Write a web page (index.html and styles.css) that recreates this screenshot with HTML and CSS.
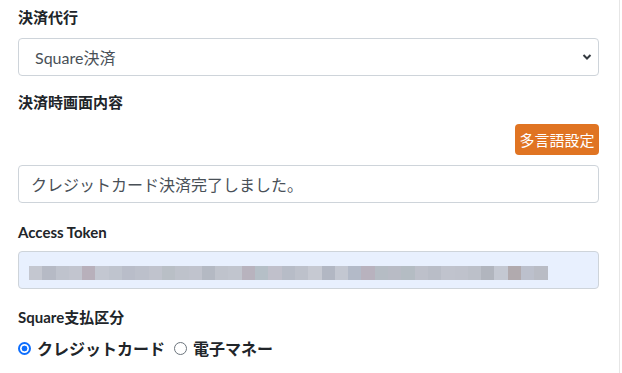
FILE: index.html
```html
<!DOCTYPE html>
<html lang="ja">
<head>
    <meta charset="UTF-8">
    <title>決済設定</title>
    <link rel="stylesheet" href="styles.css">
</head>
<body>
    <div class="panel">
        <div class="form-group">
            <label class="form-label first">決済代行</label>
            <div class="select-box">
                <span>Square決済</span>
                <svg class="chevron" width="10" height="8" viewBox="0 0 10 8"><path d="M1.5 2 L5 5.5 L8.5 2" fill="none" stroke="#343a40" stroke-width="2"/></svg>
            </div>
        </div>

        <div class="form-group">
            <label class="form-label">決済時画面内容</label>
            <div class="btn-row">
                <button class="btn-lang">多言語設定</button>
            </div>
            <div class="text-box">クレジットカード決済完了しました。</div>
        </div>

        <div class="form-group">
            <label class="form-label">Access Token</label>
            <div class="text-box token-box">
                <!-- token hidden by mosaic -->
                <div class="mosaic">
                    <i style="background:#c4c7d0"></i><i style="background:#b6bac5"></i><i style="background:#bfc3cd"></i><i style="background:#c2c5cf"></i><i style="background:#b8b0bb"></i><i style="background:#c3c7d1"></i><i style="background:#bfc4ce"></i><i style="background:#b9bdc9"></i><i style="background:#bcc0cb"></i><i style="background:#c0c3cd"></i><i style="background:#b9bfc6"></i><i style="background:#bec2cb"></i><i style="background:#c0c3cd"></i><i style="background:#b4b9c3"></i><i style="background:#bfc3cc"></i><i style="background:#c1c5ce"></i><i style="background:#b8b3be"></i><i style="background:#b5bfc7"></i><i style="background:#c0c0cb"></i><i style="background:#b7bcc7"></i><i style="background:#bdc1cb"></i><i style="background:#c6c9d2"></i><i style="background:#b2b7c3"></i><i style="background:#c3c7d1"></i><i style="background:#b3bac8"></i><i style="background:#b8b2be"></i><i style="background:#b5bcc4"></i><i style="background:#b8bbc5"></i><i style="background:#b4bcc3"></i><i style="background:#bdc0ca"></i><i style="background:#b9bdc7"></i><i style="background:#c0c3cd"></i><i style="background:#bfc2cc"></i><i style="background:#bcc0c9"></i><i style="background:#b1b5be"></i><i style="background:#c4c8d2"></i><i style="background:#b1aaae"></i><i style="background:#bcc0cc"></i><i style="background:#b9bcc5"></i>
                </div>
            </div>
        </div>

        <div class="form-group">
            <label class="form-label">Square支払区分</label>
            <div class="radio-row">
                <label class="radio"><span class="dot checked"></span>クレジットカード</label>
                <label class="radio"><span class="dot"></span>電子マネー</label>
            </div>
        </div>
    </div>
</body>
</html>
```

FILE: styles.css
```css
body {
    margin: 0;
    background: #fff;
    font-family: Lato, "Noto Sans CJK JP", sans-serif;
    color: #212529;
}
.panel {
    width: 581px;
    height: 373px;
    padding: 0 20px 0 18px;
    border-right: 1px solid #e6e6e6;
    box-sizing: content-box;
}
.form-group {
    display: flex;
    flex-direction: column;
}
.form-label {
    font-size: 15px;
    font-weight: bold;
    line-height: 20px;
    margin-top: 7px;
    margin-bottom: 9px;
}
.form-label.first {
    margin-bottom: 11px;
}
.select-box, .text-box {
    height: 36px;
    border: 1px solid #ced4da;
    border-radius: 4px;
    display: flex;
    align-items: center;
    font-size: 16px;
    color: #495057;
}
.select-box {
    justify-content: space-between;
    padding: 0 6px 0 16px;
    margin-bottom: 9px;
}
.text-box {
    padding: 0 12px;
    margin-bottom: 12px;
}
.btn-row {
    display: flex;
    justify-content: flex-end;
    margin-top: 3px;
    margin-bottom: 10px;
}
.btn-lang {
    width: 84px;
    height: 31px;
    border: none;
    border-radius: 4px;
    background: #e07422;
    color: #fff;
    font-family: "Noto Sans CJK JP", sans-serif;
    font-size: 15px;
    padding: 0;
}
.token-box {
    background: #e8f0fe;
    margin-bottom: 11px;
    align-items: flex-start;
    padding: 14px 10px 0;
    height: 22px;
}
.mosaic {
    display: flex;
    height: 14px;
}
.mosaic i {
    width: 13.3px;
    height: 14px;
}
.radio-row {
    display: flex;
    gap: 9px;
}
.radio {
    display: flex;
    align-items: center;
    font-size: 16px;
    font-weight: bold;
    gap: 6px;
    font-family: "Noto Sans CJK JP", sans-serif;
}
.dot {
    width: 11px;
    height: 11px;
    border: 1px solid #6c757d;
    border-radius: 50%;
}
.dot.checked {
    border: 2px solid #0d6efd;
    width: 9px;
    height: 9px;
    background: radial-gradient(circle, #0d6efd 0 2.6px, #fff 3.2px);
}
```
